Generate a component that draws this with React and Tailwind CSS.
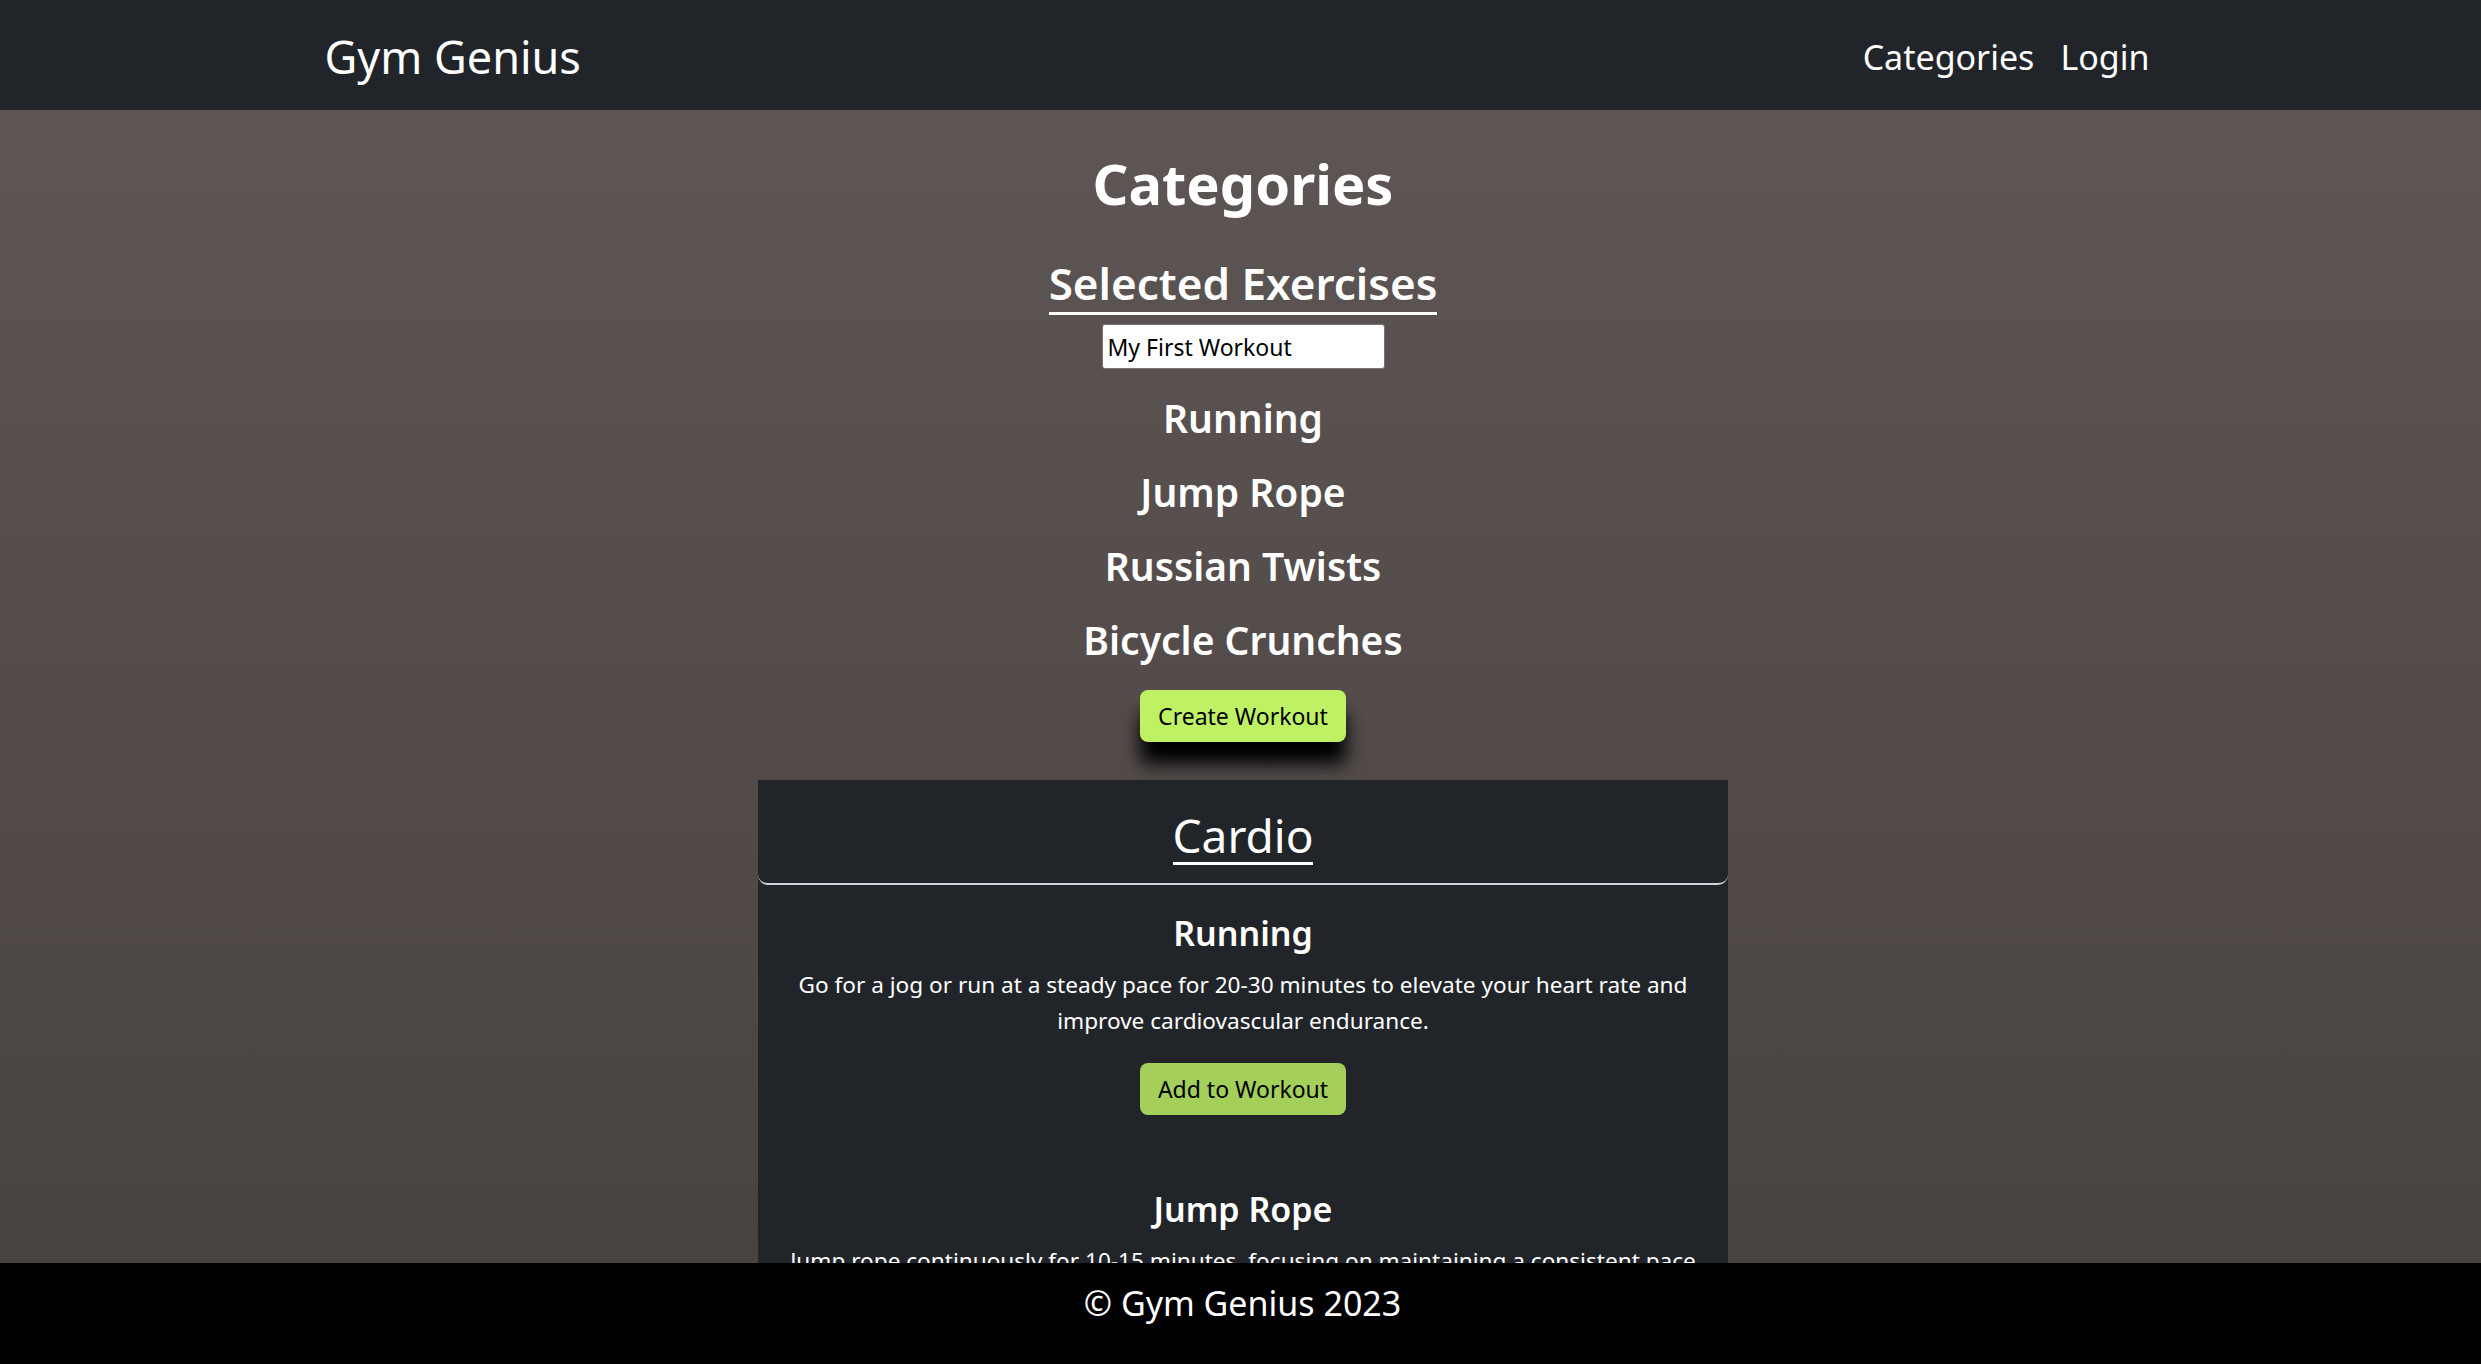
const font = { fontFamily: '"Noto Sans", "Open Sans", sans-serif' };

const selected = ["Running", "Jump Rope", "Russian Twists", "Bicycle Crunches"];

const cardio = [
  {
    name: "Running",
    text: "Go for a jog or run at a steady pace for 20-30 minutes to elevate your heart rate and improve cardiovascular endurance.",
  },
  {
    name: "Jump Rope",
    text: "Jump rope continuously for 10-15 minutes, focusing on maintaining a consistent pace and rhythm to improve coordination and stamina.",
  },
];

function Navbar() {
  return (
    <header className="h-[110px] shrink-0 bg-[#212529]">
      <div className="mx-auto flex h-full w-[1832px] items-center justify-between pt-[3px]">
        <a className="text-[45px] leading-[56px] text-white">Gym Genius</a>
        <nav className="flex gap-[26px] pr-[7px] text-[34px] leading-[44px] text-white">
          <a>Categories</a>
          <a>Login</a>
        </nav>
      </div>
    </header>
  );
}

function SelectedExercises() {
  return (
    <section className="flex flex-col items-center">
      <h1 className="text-[56px] font-bold leading-[72px] text-white">Categories</h1>
      <h2 className="mt-[36px] inline-block border-b-[3px] border-white text-[44px] font-semibold leading-[57px] text-white">
        Selected Exercises
      </h2>
      <input
        className="mt-[9px] h-[45px] w-[283px] rounded-[3px] border border-[#767676] bg-white pl-[5px] text-[23px] text-black outline-none"
        defaultValue="My First Workout"
      />
      <div className="mt-[24px] flex flex-col items-center">
        {selected.map((name) => (
          <h3 key={name} className="mb-[24px] text-[39px] font-semibold leading-[50px] text-white">
            {name}
          </h3>
        ))}
      </div>
      <button className="mt-px h-[52px] rounded-[8px] bg-[#bef264] px-[18px] text-[23px] leading-[36px] text-black shadow-[0_22px_18px_#000]">
        Create Workout
      </button>
    </section>
  );
}

function CategoryCard() {
  return (
    <section className="mx-auto mt-[38px] w-[970px] bg-[#212529] pb-10">
      <div className="flex justify-center rounded-b-[10px] border-b-2 border-[#ced4da] pt-[28px] pb-[18px]">
        <h2 className="inline-block border-b-[3px] border-white text-[46px] leading-[54px] text-white">
          Cardio
        </h2>
      </div>
      <div className="px-[20px] pt-[27px]">
        {cardio.map((ex) => (
          <div key={ex.name} className="mb-[73px] flex flex-col items-center text-center">
            <h4 className="text-[34px] font-semibold leading-[43px] text-white">{ex.name}</h4>
            <p className="mt-[12px] text-[22.6px] leading-[36px] text-white">{ex.text}</p>
            <button className="mt-[24px] h-[52px] rounded-[8px] bg-[#a3cf5a] px-[18px] text-[23px] leading-[36px] text-black">
              Add to Workout
            </button>
          </div>
        ))}
      </div>
    </section>
  );
}

export default function App() {
  return (
    <div className="flex h-screen flex-col overflow-hidden" style={font}>
      <Navbar />
      <main className="min-h-0 flex-1 overflow-hidden bg-linear-to-b from-[#5e5655] to-[#484241] pt-[37px] pl-[5px]">
        <SelectedExercises />
        <CategoryCard />
      </main>
      <footer className="h-[101px] shrink-0 bg-black pt-[20px] pl-[4px] text-center text-[34px] leading-[40px] text-white">
        © Gym Genius 2023
      </footer>
    </div>
  );
}
